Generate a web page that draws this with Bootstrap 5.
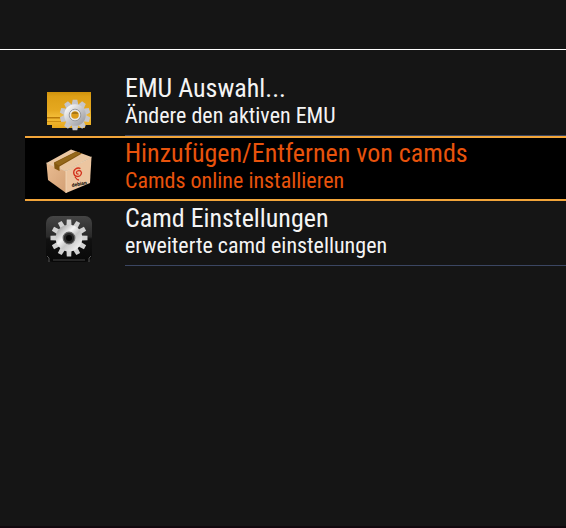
<!DOCTYPE html>
<html lang="de">
<head>
<meta charset="utf-8">
<meta name="viewport" content="width=device-width, initial-scale=1">
<title>Camd</title>
<link href="https://cdn.jsdelivr.net/npm/bootstrap@5.3.0/dist/css/bootstrap.min.css" rel="stylesheet">
<style>
  body { background: #151515; color: #f4f4f4; font-family: "Roboto Condensed", "Liberation Sans Narrow", Roboto, sans-serif; border-bottom: 2px solid #10080d; }
  .top-strip { height: 50px; border-bottom: 1px solid #fff; }
  .menu { padding: 21px 0 0 25px; }
  .entry { height: 65px; color: #f4f4f4; }
  .entry-icon { width: 100px; padding-left: 20px; }
  .entry-icon svg { display: block; width: 48px; height: 52px; }
  .entry-text { border-bottom: 1px solid #3b4662; padding-top: 2px; }
  .entry-title { font-size: 26px; line-height: 30px; }
  .entry-sub { font-size: 22px; line-height: 26px; }
  .entry.active { background: #000; color: #e8530c; border-top: 2px solid #f2a53a; border-bottom: 2px solid #f2a53a; }
  .entry.active .entry-text { border-bottom: 0; padding-top: 0; }
</style>
</head>
<body class="min-vh-100">
<header class="top-strip"></header>
<main>
<nav class="menu d-flex flex-column" aria-label="Camd">
  <a href="#emu" class="entry d-flex text-decoration-none">
    <span class="entry-icon flex-shrink-0 align-self-end">
      <svg viewBox="0 0 48 52" aria-hidden="true">
        <defs>
          <linearGradient id="gold" x1="0" y1="0" x2="0" y2="1"><stop offset="0" stop-color="#cf920c"/><stop offset=".12" stop-color="#dd9f16"/><stop offset=".5" stop-color="#e5a81f"/><stop offset=".7" stop-color="#f3bd38"/><stop offset="1" stop-color="#e6a71c"/></linearGradient>
          <linearGradient id="steel" x1="0" y1="0" x2="1" y2="1"><stop offset="0" stop-color="#f5f5f5"/><stop offset=".5" stop-color="#c9c9cb"/><stop offset="1" stop-color="#a4a4a8"/></linearGradient>
        </defs>
        <path d="M2 8H46V41H40V44H7V41H2Z" fill="url(#gold)"/>
        <path d="M2 33H18V34.500H2Z" fill="#b97908"/>
        <path d="M2 37H18V38H2Z" fill="#cc8e12"/>
        <g fill="#c6c6ca" transform="translate(30 31)">
          <path id="tooth" d="M-3.600-9L-2.300-15.200H2.300L3.600-9Z"/>
          <use href="#tooth" transform="rotate(36)"/><use href="#tooth" transform="rotate(72)"/><use href="#tooth" transform="rotate(108)"/><use href="#tooth" transform="rotate(144)"/><use href="#tooth" transform="rotate(180)"/><use href="#tooth" transform="rotate(216)"/><use href="#tooth" transform="rotate(252)"/><use href="#tooth" transform="rotate(288)"/><use href="#tooth" transform="rotate(324)"/>
          <circle r="7.400" fill="none" stroke="url(#steel)" stroke-width="6.800"/>
          <circle r="5.800" fill="none" stroke="#97979b" stroke-width="1"/>
          <circle r="4.500" fill="#dc9b1b" stroke="#e9e9e9" stroke-width="1.400"/>
          <path d="M-3.500-1A3.800 3.800 0 0 1 3.500-1Z" fill="#a87616"/>
        </g>
      </svg>
    </span>
    <span class="entry-text flex-grow-1"><span class="entry-title d-block">EMU Auswahl...</span><span class="entry-sub d-block">Ändere den aktiven EMU</span></span>
  </a>
  <a href="#camds" class="entry active d-flex text-decoration-none" aria-current="true">
    <span class="entry-icon flex-shrink-0 align-self-end">
      <svg viewBox="0 2 48 52" aria-hidden="true">
        <defs><linearGradient id="side" x1="0" y1="0" x2="1" y2="1"><stop offset="0" stop-color="#e9bc91"/><stop offset="1" stop-color="#d3a075"/></linearGradient></defs>
        <path d="M1.500 18L26 4.500L46.500 12L21 26Z" fill="#eac7a2"/>
        <path d="M1.500 18L21 26V48L3 35Z" fill="url(#side)"/>
        <path d="M21 26L46.500 12L45 38L21 48Z" fill="#ecc5a0"/>
        <path d="M1.500 18L21 26V48M21 26L46.500 12" fill="none" stroke="#f4dabc" stroke-width=".8"/>
        <path d="M9 17.500L31 6.400L37 8.600L14.500 21.500V26L9.500 23.500Z" fill="#83560f"/>
        <path d="M9.500 18L31 7L35 8.600L14 20.500Z" fill="#94681b"/>
        <path d="M33.500 29C31.500 29.500 30.500 27 32.500 26C35 24.500 37.500 27 36 29.500C34.500 32.500 29.500 32 28.800 28.500C28 24.500 32 22 35.500 23.500M30 32Q32 35 34 35" fill="none" stroke="#d3301c" stroke-width="1.300"/>
        <text x="27" y="42" transform="rotate(-10 27 42)" font-family="Roboto, sans-serif" font-size="5" font-weight="900" fill="#21150e">debian</text>
      </svg>
    </span>
    <span class="entry-text flex-grow-1"><span class="entry-title d-block">Hinzufügen/Entfernen von camds</span><span class="entry-sub d-block">Camds online installieren</span></span>
  </a>
  <a href="#settings" class="entry d-flex text-decoration-none">
    <span class="entry-icon flex-shrink-0 align-self-end">
      <svg viewBox="0 0 48 52" aria-hidden="true">
        <defs>
          <linearGradient id="tile" x1="0" y1="0" x2="0" y2="1"><stop offset="0" stop-color="#454545"/><stop offset=".45" stop-color="#2a2a2a"/><stop offset=".5" stop-color="#111"/><stop offset="1" stop-color="#080808"/></linearGradient>
          <linearGradient id="silver" x1="0" y1="0" x2="1" y2="1"><stop offset="0" stop-color="#aaa"/><stop offset=".35" stop-color="#f4f4f4"/><stop offset=".6" stop-color="#c6c6c6"/><stop offset="1" stop-color="#eee"/></linearGradient>
        </defs>
        <rect x="1" y="2" width="46" height="46" rx="7" fill="url(#tile)"/>
        <path d="M2 42L4 44V48M46 42L44 44V48" fill="none" stroke="#555"/>
        <path d="M8 46H40" stroke="#444"/>
        <g fill="#d2d2d2" transform="translate(24 24)">
          <path id="cog" d="M-2.600-11L-2.200-18.500H2.200L2.600-11Z"/>
          <use href="#cog" transform="rotate(30)"/><use href="#cog" transform="rotate(60)"/><use href="#cog" transform="rotate(90)"/><use href="#cog" transform="rotate(120)"/><use href="#cog" transform="rotate(150)"/><use href="#cog" transform="rotate(180)"/><use href="#cog" transform="rotate(210)"/><use href="#cog" transform="rotate(240)"/><use href="#cog" transform="rotate(270)"/><use href="#cog" transform="rotate(300)"/><use href="#cog" transform="rotate(330)"/>
          <circle r="9.500" fill="none" stroke="url(#silver)" stroke-width="7.600"/>
          <circle r="5.800" fill="#2a2a2a" stroke="#666" stroke-width="1.200"/>
          <circle r="3" fill="#080808"/>
        </g>
      </svg>
    </span>
    <span class="entry-text flex-grow-1"><span class="entry-title d-block">Camd Einstellungen</span><span class="entry-sub d-block">erweiterte camd einstellungen</span></span>
  </a>
</nav>
</main>
<script src="https://cdn.jsdelivr.net/npm/bootstrap@5.3.0/dist/js/bootstrap.bundle.min.js"></script>
</body>
</html>
